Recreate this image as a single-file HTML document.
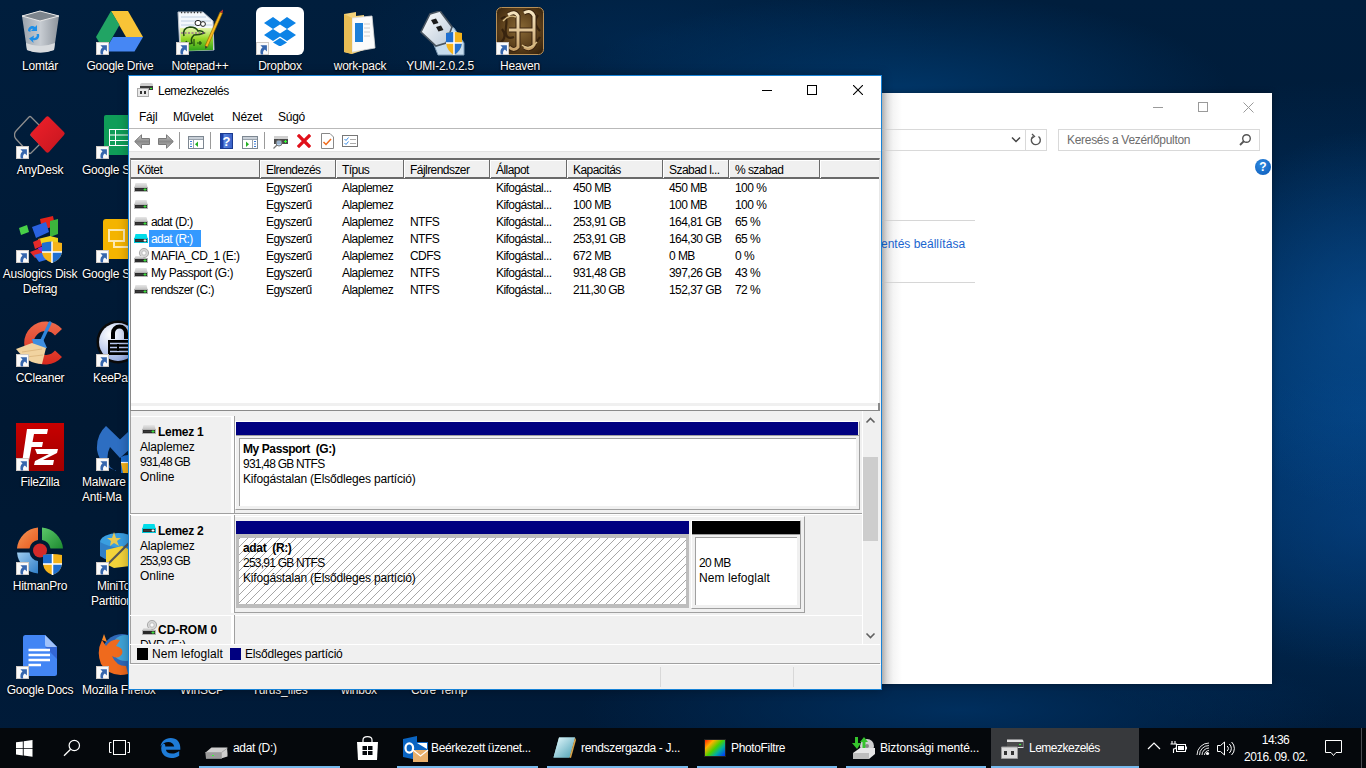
<!DOCTYPE html>
<html><head><meta charset="utf-8">
<style>
*{margin:0;padding:0;box-sizing:border-box}
html,body{width:1366px;height:768px;overflow:hidden}
body{position:relative;font-family:"Liberation Sans",sans-serif;font-size:11px;color:#000;
background:
 radial-gradient(ellipse 170px 190px at 1366px 320px, rgba(10,80,150,.65), rgba(10,80,150,0) 100%),
 radial-gradient(ellipse 200px 150px at 1366px 520px, rgba(8,70,140,.5), rgba(8,70,140,0) 100%),
 radial-gradient(ellipse 540px 330px at 1366px 410px, rgba(0,62,124,.95), rgba(0,62,124,0) 100%),
 radial-gradient(ellipse 330px 100px at 900px 92px, rgba(0,60,115,.8), rgba(0,60,115,0) 100%),
 radial-gradient(ellipse 300px 90px at 640px 40px, rgba(0,45,90,.55), rgba(0,45,90,0) 100%),
 radial-gradient(ellipse 380px 70px at 960px 710px, rgba(0,50,100,.85), rgba(0,50,100,0) 100%),
 linear-gradient(180deg,#001e3d 0%,#001b38 30%,#001832 55%,#001a36 80%,#001b3a 100%);
}
.abs{position:absolute}
.cell{position:absolute;height:17px;line-height:17px;white-space:nowrap;font-size:12px;letter-spacing:-0.55px;padding-top:1px;height:18px}
.hdic,.cdic{position:absolute;display:block}
.hdr{position:absolute;top:160px;height:18px;line-height:18px;padding-left:6px;padding-top:1px;white-space:nowrap;font-size:12px;letter-spacing:-0.55px}
.hsep{position:absolute;top:160px;width:2px;height:18px;border-left:1px solid #6a6a6a;border-right:1px solid #fff}
.di{position:absolute;width:76px;color:#fff;font-size:12px;letter-spacing:-0.25px;line-height:15px;text-align:center;text-shadow:0 0 2px #000,0 1px 2px #000}
.di .lb{position:absolute;left:-6px;width:88px;top:49px}
.sc{position:absolute;width:14px;height:14px;background:#fff;border:1px solid #bbb}
.sc:after{content:"";position:absolute;left:3px;top:3px;width:7px;height:7px;border-top:2px solid #2f6cbf;border-right:2px solid #2f6cbf;border-top-right-radius:6px}
.tbt{position:absolute;top:728px;height:40px;line-height:40px;color:#fff;font-size:12px;letter-spacing:-0.35px;white-space:nowrap}
.ul{position:absolute;top:766px;height:2px;background:#76b9ed}
.bold{font-weight:bold}
.wt{font-size:12px;letter-spacing:-0.5px}
</style></head><body>

<!-- back window: control panel -->
<div class="abs" style="left:881px;top:93px;width:391px;height:591px;background:#fff;box-shadow:0 0 6px rgba(0,0,0,.35)"></div>
<div class="abs" style="left:882px;top:93px;width:20px;height:591px;background:linear-gradient(90deg,#cdcdcd,#e6e6e6 25%,#f4f4f4 55%,#fff)"></div>
<!-- title buttons -->
<div class="abs" style="left:1153px;top:107px;width:10px;height:1px;background:#9a9a9a"></div>
<div class="abs" style="left:1198px;top:102px;width:10px;height:10px;border:1px solid #9a9a9a"></div>
<svg class="abs" style="left:1243px;top:102px" width="11" height="11"><path d="M0.5 0.5L10.5 10.5M10.5 0.5L0.5 10.5" stroke="#9a9a9a" stroke-width="1"/></svg>
<!-- address bar -->
<div class="abs" style="left:881px;top:129px;width:166px;height:22px;border:1px solid #d9d9d9;border-left:none"></div>
<div class="abs" style="left:1025px;top:129px;width:1px;height:22px;background:#d9d9d9"></div>
<svg class="abs" style="left:1011px;top:136px" width="10" height="8"><path d="M1 1.5L5 5.5L9 1.5" stroke="#444" stroke-width="1.5" fill="none"/></svg>
<svg class="abs" style="left:1029px;top:132px" width="14" height="16"><path d="M9.5 4.5A4.5 4.5 0 1 1 4 4.6" stroke="#555" stroke-width="1.4" fill="none"/><path d="M3 2L5.5 4.5L2.5 6.5" stroke="#555" stroke-width="1.3" fill="none"/></svg>
<div class="abs" style="left:1058px;top:129px;width:202px;height:22px;border:1px solid #d9d9d9"></div>
<div class="abs" style="left:1067px;top:130px;height:22px;line-height:21px;font-size:12px;letter-spacing:-0.3px;color:#6d6d6d;white-space:nowrap">Keresés a Vezérlőpulton</div>
<svg class="abs" style="left:1238px;top:133px" width="14" height="14"><circle cx="8.5" cy="5.5" r="3.8" stroke="#555" stroke-width="1.4" fill="none"/><path d="M6 8L2 12" stroke="#555" stroke-width="1.8"/></svg>
<!-- help -->
<div class="abs" style="left:1255px;top:159px;width:16px;height:16px;border-radius:50%;background:radial-gradient(circle at 40% 35%,#2f8ae0,#0a58b8);color:#fff;font-weight:bold;font-size:12px;line-height:16px;text-align:center">?</div>
<div class="abs" style="left:881px;top:220px;width:94px;height:1px;background:#d6d6d6"></div>
<div class="abs" style="left:881px;top:282px;width:94px;height:1px;background:#d6d6d6"></div>
<div class="abs" style="left:871px;top:235px;height:18px;line-height:18px;font-size:12px;color:#1a64cf;white-space:nowrap">mentés beállítása</div>

<!-- desktop icons -->
<svg width="0" height="0" style="position:absolute"><defs>
<symbol id="scut" viewBox="0 0 13 13"><rect x="0" y="0" width="13" height="13" fill="#fafafa"/><rect x="0.5" y="0.5" width="12" height="12" fill="none" stroke="#cfc9c4"/><path d="M4.4 3.2H10.9V9.4L8.9 7.5Q6.4 8.8 7.2 12.6H4.8Q3.4 7.8 6.5 5.4Z" fill="#3666ad"/></symbol>
<linearGradient id="hdg" x1="0" y1="0" x2="0" y2="1"><stop offset="0" stop-color="#e6e6e6"/><stop offset="1" stop-color="#c4c4c4"/></linearGradient>
<symbol id="hd" viewBox="0 0 14 9"><path d="M1.5 0H12.5L13.5 4H0.5Z" fill="url(#hdg)"/><rect x="0.5" y="4.5" width="13" height="4" fill="#2b2b2b" stroke="#b4b4b4"/><path d="M2 6.5H9" stroke="#444" stroke-width=".6"/><rect x="9.5" y="6" width="3" height="1" fill="#3ddc3d"/><rect x="10.5" y="5" width="1" height="3" fill="#3ddc3d"/></symbol>
<symbol id="hdc" viewBox="0 0 14 9"><path d="M1.5 0H12.5L13.5 4H0.5Z" fill="#00dde9"/><rect x="0.5" y="4.5" width="13" height="4" fill="#2b2b2b" stroke="#00c8d8"/><path d="M2 6.5H9" stroke="#444" stroke-width=".6"/><rect x="9.5" y="5.5" width="3" height="2" rx="1" fill="#fff"/></symbol>
<symbol id="cd" viewBox="0 0 15 15"><circle cx="10" cy="5" r="4.6" fill="#d6d6d6" stroke="#9c9c9c" stroke-width=".8"/><circle cx="10" cy="5" r="2.2" fill="#f4f4f4" stroke="#aaa" stroke-width=".6"/><circle cx="10" cy="5" r="1" fill="#fff"/><path d="M1.5 8H9L9.5 10H0.5Z" fill="url(#hdg)"/><rect x="0.5" y="10.5" width="13" height="4" fill="#2b2b2b" stroke="#b4b4b4"/><rect x="9.5" y="12" width="3" height="1" fill="#3ddc3d"/><rect x="10.5" y="11" width="1" height="3" fill="#3ddc3d"/></symbol>
<linearGradient id="binG" x1="0" y1="0" x2="1" y2="0"><stop offset="0" stop-color="#9aa3ad"/><stop offset=".5" stop-color="#c7ccd2"/><stop offset="1" stop-color="#8d949c"/></linearGradient>
</defs></svg>

<!-- Lomtar -->
<svg class="abs" style="left:21px;top:10px" width="39" height="43"><path d="M1 6L19 1L38 6L33 40Q19 45 6 40Z" fill="url(#binG)"/><path d="M1 6L19 1L38 6L19 11Z" fill="#7c848c" stroke="#e8e8e8" stroke-width="1"/><path d="M5 33Q19 39 34 33L33 40Q19 45 6 40Z" fill="#d8dbde"/><path d="M7 21C7 16 12 15 14 17L16 15V21H10L12 19C10 18 9 20 9.5 22ZM18 24C19 28 16 31 12 30L12.5 33L8 28.5L13 25.5L12.5 28C15 28 16.5 26 15.5 24Z" fill="#1d8fe8"/></svg>
<div class="di" style="left:2px;top:10px"><div class="lb">Lomtár</div></div>

<!-- Google Drive -->
<svg class="abs" style="left:96px;top:11px" width="48" height="41"><path d="M15 0H32L47 26H30Z" fill="#f8c437"/><path d="M15 0L0 26L8.5 40.5L23.5 14Z" fill="#21a464"/><path d="M8.5 40.5H38.5L47 26H17Z" fill="#4687f4"/></svg>
<svg class="abs" style="left:96px;top:42px" width="13" height="13"><use href="#scut"/></svg>
<div class="di" style="left:82px;top:10px"><div class="lb">Google Drive</div></div>

<!-- Notepad++ -->
<svg class="abs" style="left:176px;top:9px" width="48" height="43"><defs><linearGradient id="npg" x1="0" y1="0" x2="0" y2="1"><stop offset="0" stop-color="#e8f6b0"/><stop offset=".45" stop-color="#9ad82a"/><stop offset="1" stop-color="#2aa01a"/></linearGradient></defs><path d="M2 3H27L37 12L38 41L4 42Z" fill="#f4f8fc" stroke="#b8c0ca"/><path d="M4 19H37V41L5 42Z" fill="url(#npg)"/><path d="M5 3.5H26" stroke="#333" stroke-width="1.4" stroke-dasharray="1.2 2"/><path d="M5 8H30M5 12H35M5 16H36" stroke="#b0c4dc" stroke-width=".8"/><path d="M8 27Q6 19 14 18Q20 18 22 22Q26 21 28 24Q24 26 18 26Q14 30 16 34Q12 36 10 32" fill="none" stroke="#1e4a10" stroke-width="1.6"/><ellipse cx="22" cy="14" rx="3" ry="2.6" fill="#fff" stroke="#222"/><ellipse cx="27" cy="15" rx="2.4" ry="2.4" fill="#fff" stroke="#222"/><path d="M18 37V30M21 34H26M24 32V36" stroke="#1e4a10" stroke-width="1.2"/><path d="M5 24H30" stroke="#8a3aa0" stroke-width="1" stroke-dasharray="2 1.5"/><path d="M29 37L44 3L46.5 4L31.5 38Z" fill="#f6b81d" stroke="#8a5a00" stroke-width=".6"/><path d="M44 3L46.5 4L47 0.5Z" fill="#c33"/><path d="M29 37L31.5 38L29.5 40Z" fill="#333"/></svg>
<svg class="abs" style="left:176px;top:42px" width="13" height="13"><use href="#scut"/></svg>
<div class="di" style="left:162px;top:10px"><div class="lb">Notepad++</div></div>

<!-- Dropbox -->
<div class="abs" style="left:256px;top:7px;width:48px;height:48px;background:#fff;border-radius:6px"></div>
<svg class="abs" style="left:264px;top:17px" width="32" height="29"><path d="M9 0L0 6L9 12L0 18L9 24L16 19.5L23 24L32 18L23 12L32 6L23 0L16 5Z M9 12L16 7.5L23 12L16 16.5Z" fill="#0d83e6" fill-rule="evenodd"/><path d="M9 25.5L16 21L23 25.5L16 29.5Z" fill="#0d83e6"/></svg>
<svg class="abs" style="left:256px;top:42px" width="13" height="13"><use href="#scut"/></svg>
<div class="di" style="left:242px;top:10px"><div class="lb">Dropbox</div></div>

<!-- work-pack folder -->
<svg class="abs" style="left:344px;top:12px" width="32" height="42"><path d="M0 2L12 0V4L20 3V38L8 42L0 40Z" fill="#f3d27a"/><path d="M8 6L28 4L31 36L8 40Z" fill="#fbfbfb" stroke="#d9d9d9" stroke-width=".8"/><path d="M11 11H19V30H11Z" fill="#1c7fd8"/><path d="M20 12H26M20 16H26M20 20H26M20 24H26" stroke="#ccc"/><path d="M0 2L8 6V42L0 40Z" fill="#e8bd55"/></svg>
<div class="di" style="left:322px;top:10px"><div class="lb">work-pack</div></div>

<!-- YUMI -->
<svg class="abs" style="left:420px;top:11px" width="45" height="45"><defs><linearGradient id="ymg" x1="0" y1="0" x2="1" y2="1"><stop offset="0" stop-color="#ffffff"/><stop offset="1" stop-color="#b8c8d8"/></linearGradient></defs><path d="M14 34L28 14L34 17L44 32V44H18Z" fill="#c6dcee" stroke="#7c9ab4"/><path d="M10 3L20 0L32 16L26 32L16 35L1 21Z" fill="url(#ymg)" stroke="#4a5560" stroke-width="1.6"/><path d="M11 9L16 7.5L18.5 12L13.5 13.5ZM16 16L21 14.5L23.5 19L18.5 20.5Z" fill="#1c1c1c"/><path d="M26 22Q34 20 42 22V32Q41 40 34 44Q27 40 26 32Z" fill="#f5b31a"/><path d="M26 22Q30 21 34 21V32H26ZM34 32H42Q41 40 34 44Z" fill="#1f6fd0"/><path d="M34 21V44M26 32H42" stroke="#fff" stroke-width="1.5"/></svg>
<div class="di" style="left:402px;top:10px"><div class="lb">YUMI-2.0.2.5</div></div>

<!-- Heaven -->
<svg class="abs" style="left:496px;top:7px" width="48" height="48"><defs><radialGradient id="hvg" cx=".5" cy=".45" r=".75"><stop offset="0" stop-color="#8a6a36"/><stop offset=".55" stop-color="#5a3e1a"/><stop offset="1" stop-color="#2a1a08"/></radialGradient><linearGradient id="hvl" x1="0" y1="0" x2="0" y2="1"><stop offset="0" stop-color="#f6e6c2"/><stop offset="1" stop-color="#c8a26a"/></linearGradient></defs><rect x="0.5" y="0.5" width="47" height="47" rx="5" fill="url(#hvg)" stroke="#b89058"/><path d="M5 12Q12 6 10 20T18 30M30 42Q38 40 44 30M4 36Q12 30 6 22M42 8Q36 16 44 24" stroke="#2e1c0a" stroke-width="2.2" fill="none" opacity=".8"/><path d="M12 8Q19 3 22 9V40Q18 45 13 40M28 6Q35 2 38 9V38Q34 44 28 40M13 23H37" stroke="#3a2410" stroke-width="5" fill="none"/><path d="M12 8Q19 3 22 9V40Q18 45 13 40M28 6Q35 2 38 9V38Q34 44 28 40M13 23H37" stroke="url(#hvl)" stroke-width="3" fill="none"/><path d="M7 14Q13 7 20 10M26 38Q33 44 41 35" stroke="#d8be88" stroke-width="1.4" fill="none"/></svg>
<svg class="abs" style="left:496px;top:42px" width="13" height="13"><use href="#scut"/></svg>
<div class="di" style="left:482px;top:10px"><div class="lb">Heaven</div></div>

<!-- AnyDesk -->
<svg class="abs" style="left:14px;top:115px" width="52" height="40"><defs><linearGradient id="adr" x1="0" y1="0" x2="1" y2="1"><stop offset="0" stop-color="#f0202a"/><stop offset="1" stop-color="#c4161f"/></linearGradient></defs><path d="M15 2Q16 1 17 2L26 11L17 20L26 29L17 38Q16 39 15 38L2 24Q0.5 22.5 0.5 20Q0.5 17.5 2 16Z" fill="none" stroke="#8e8e8e" stroke-width="1.3"/><path d="M32 2Q33.5 0.5 35 2L50 17Q51.5 18.5 50 20L35 37Q33.5 38.5 32 37L17 21Q15.5 19.5 17 18Z" fill="url(#adr)"/></svg>
<svg class="abs" style="left:16px;top:146px" width="13" height="13"><use href="#scut"/></svg>
<div class="di" style="left:2px;top:114px"><div class="lb">AnyDesk</div></div>

<!-- Google Sheets (clipped) -->
<div class="abs" style="left:104px;top:115px;width:32px;height:40px;background:#0f9d58;border-radius:2px"></div>
<svg class="abs" style="left:109px;top:129px" width="20" height="17"><path d="M0.5 0.5H20M0.5 6H20M0.5 11.5H20M0.5 16.5H20M0.5 0V17M6.5 0V17" stroke="#fff" stroke-width="1"/></svg>
<svg class="abs" style="left:96px;top:146px" width="13" height="13"><use href="#scut"/></svg>
<div class="abs" style="left:82px;top:163px;height:15px;line-height:15px;color:#fff;font-size:12px;letter-spacing:-0.25px;text-shadow:0 0 2px #000,0 1px 2px #000;white-space:nowrap">Google S</div>

<!-- Auslogics -->
<svg class="abs" style="left:19px;top:216px" width="44" height="47"><path d="M21 3L34 0L36 10L23 14Z" fill="#e2231a"/><path d="M13 11L27 6L30 16L17 22Z" fill="#2a62e0"/><path d="M31 5L39 3V18L31 21Z" fill="#3cb43c"/><path d="M0 12L8 9L10 16L2 19Z" fill="#48d048"/><path d="M19 23L31 20L39 22V30L25 33Z" fill="#f0d21e"/><path d="M14 26L21 23L23 30L16 33Z" fill="#e42a2a"/><path d="M19 32L28 29L30 37L21 40Z" fill="#8b2ad8"/><path d="M11 36L19 33L24 37L16 42Z" fill="#e42a2a"/><path d="M15 39L26 36L30 43L20 46Z" fill="#2f6fe8"/><path d="M23 27Q32 24 43 27V36Q42 44 33 47Q24 44 23 36Z" fill="#f5b31a"/><path d="M23 27Q28 25.5 33 25.5V36H23ZM33 36H43Q42 44 33 47Z" fill="#1f6fd0"/><path d="M33 25.5V47M23 36H43" stroke="#fff" stroke-width="1.5"/></svg>
<svg class="abs" style="left:16px;top:250px" width="13" height="13"><use href="#scut"/></svg>
<div class="di" style="left:2px;top:218px"><div class="lb">Auslogics Disk<br>Defrag</div></div>

<!-- Google Slides (clipped) -->
<div class="abs" style="left:103px;top:219px;width:32px;height:40px;background:#f4b400;border-radius:3px"></div>
<svg class="abs" style="left:108px;top:228px" width="22" height="22"><rect x="1" y="2" width="15" height="11" fill="none" stroke="#fde9b0" stroke-width="2"/><path d="M6 13V19H21" stroke="#fde9b0" stroke-width="2" fill="none"/></svg>
<svg class="abs" style="left:96px;top:250px" width="13" height="13"><use href="#scut"/></svg>
<div class="abs" style="left:82px;top:267px;height:15px;line-height:15px;color:#fff;font-size:12px;letter-spacing:-0.25px;text-shadow:0 0 2px #000,0 1px 2px #000;white-space:nowrap">Google S</div>

<!-- CCleaner -->
<svg class="abs" style="left:14px;top:320px" width="52" height="46"><defs><linearGradient id="ccg" x1="0" y1="0" x2="0" y2="1"><stop offset="0" stop-color="#ee6a4a"/><stop offset="1" stop-color="#d8281e"/></linearGradient></defs><path d="M48 9A21.5 21.5 0 1 0 48 37L41 30.5A12 12 0 1 1 41 15.5Z" fill="url(#ccg)"/><path d="M36 3L27 22" stroke="#2f86dc" stroke-width="3.2" stroke-linecap="round"/><path d="M18 19L29 19L33 28L21 30Z" fill="#3d8ee0"/><path d="M2 29L18 23L32 28L28 44Q14 44 2 29Z" fill="#f1d3a0"/><path d="M8 32L28 29M12 37L29 35" stroke="#d9b27a" stroke-width=".8"/></svg>
<svg class="abs" style="left:16px;top:354px" width="13" height="13"><use href="#scut"/></svg>
<div class="di" style="left:2px;top:322px"><div class="lb">CCleaner</div></div>

<!-- KeePass (clipped) -->
<svg class="abs" style="left:96px;top:318px" width="32" height="48"><defs><radialGradient id="kpg" cx=".3" cy=".3" r=".8"><stop offset="0" stop-color="#ffffff"/><stop offset="1" stop-color="#8fa6e0"/></radialGradient></defs><circle cx="22" cy="24" r="21.5" fill="#0a0a0a"/><circle cx="22" cy="24" r="19" fill="url(#kpg)"/><path d="M15 21V15A8.5 8.5 0 0 1 32 15V21H28V15A4.5 4.5 0 0 0 19 15V21Z" fill="#000"/><path d="M12 22H32V37H12Z" fill="#000"/><path d="M14 25.5H32M14 29.5H32M14 33.5H32" stroke="#b8c6ee" stroke-width="1.3"/><path d="M22 26V33" stroke="#000" stroke-width="2"/></svg>
<svg class="abs" style="left:96px;top:354px" width="13" height="13"><use href="#scut"/></svg>
<div class="abs" style="left:93px;top:371px;height:15px;line-height:15px;color:#fff;font-size:12px;letter-spacing:-0.25px;text-shadow:0 0 2px #000,0 1px 2px #000;white-space:nowrap">KeePass</div>

<!-- FileZilla -->
<div class="abs" style="left:16px;top:423px;width:48px;height:48px;background:#b80000;background:linear-gradient(180deg,#c80000,#a00000)"></div>
<svg class="abs" style="left:20px;top:427px" width="40" height="40"><path d="M7 2H28L27 7H14L12.5 15H23L22 20H11.5L8.5 36H2Z" fill="#fff"/><path d="M15 22H38L37 26L23 33H34L33 38H14L15 34L29 27H17Z" fill="#fff"/></svg>
<svg class="abs" style="left:16px;top:458px" width="13" height="13"><use href="#scut"/></svg>
<div class="di" style="left:2px;top:426px"><div class="lb">FileZilla</div></div>

<!-- Malwarebytes (clipped) -->
<svg class="abs" style="left:96px;top:425px" width="32" height="48"><path d="M10 1L24 14.5L34 5V24L24 33L14 22Q9 32 14 42Q17 45 22 46Q4 42 1 25Q0 10 10 1Z" fill="#2d6ec2"/><path d="M25 32Q29 30 33 30V48H25Z" fill="#1f6fd0"/><path d="M25 38H33V48H27Z" fill="#f5b31a"/><path d="M25 37.5H33" stroke="#fff" stroke-width="1.2"/></svg>
<svg class="abs" style="left:96px;top:458px" width="13" height="13"><use href="#scut"/></svg>
<div class="abs" style="left:82px;top:475px;height:30px;line-height:15px;color:#fff;font-size:12px;letter-spacing:-0.25px;text-shadow:0 0 2px #000,0 1px 2px #000;white-space:nowrap">Malware<br>Anti-Ma</div>

<!-- HitmanPro -->
<svg class="abs" style="left:16px;top:527px" width="48" height="48"><defs><linearGradient id="hpo" x1="0" y1="0" x2="1" y2="1"><stop offset="0" stop-color="#f59a5a"/><stop offset="1" stop-color="#e8581c"/></linearGradient><linearGradient id="hpg" x1="0" y1="0" x2="1" y2="1"><stop offset="0" stop-color="#5cc86a"/><stop offset="1" stop-color="#1d8a30"/></linearGradient><linearGradient id="hpb" x1="0" y1="0" x2="1" y2="1"><stop offset="0" stop-color="#9fcdf0"/><stop offset="1" stop-color="#2f7ec8"/></linearGradient></defs><path d="M1 21.5A23 23 0 0 1 22 0.5V13A10 10 0 0 0 13.5 21.5Z" fill="url(#hpo)"/><path d="M26 0.5A23 23 0 0 1 47 21.5H34.5A10 10 0 0 0 26 13Z" fill="url(#hpg)"/><path d="M1 25.5H13.5A10 10 0 0 0 22 34V46.5A23 23 0 0 1 1 25.5Z" fill="url(#hpb)"/><circle cx="24" cy="23.5" r="7" fill="#d42a2a"/><path d="M27 28Q36 26 46 28V37Q45 45 36.5 48Q28 45 27 37Z" fill="#f5b31a"/><path d="M27 28Q31.5 27 36.5 27V37H27ZM36.5 37H46Q45 45 36.5 48Z" fill="#1f6fd0"/><path d="M36.5 27V48M27 37H46" stroke="#fff" stroke-width="1.5"/></svg>
<svg class="abs" style="left:16px;top:562px" width="13" height="13"><use href="#scut"/></svg>
<div class="di" style="left:2px;top:530px"><div class="lb">HitmanPro</div></div>

<!-- MiniTool (clipped) -->
<svg class="abs" style="left:98px;top:530px" width="30" height="44"><ellipse cx="20" cy="12" rx="18" ry="9" fill="#3a9ee0"/><path d="M2 12V26Q20 38 32 26V12Q20 22 2 12Z" fill="#2f80c8"/><path d="M8 20L24 16L32 20V36L16 38L8 34Z" fill="#f3d33a"/><path d="M10 34L32 12" stroke="#555" stroke-width="2"/><path d="M14 8L16 2L18 8L23 8L19 11L21 16L16 13L12 16L13 11L9 8Z" fill="#e8c850"/></svg>
<svg class="abs" style="left:96px;top:562px" width="13" height="13"><use href="#scut"/></svg>
<div class="abs" style="left:97px;top:579px;height:15px;line-height:15px;color:#fff;font-size:12px;letter-spacing:-0.25px;text-shadow:0 0 2px #000,0 1px 2px #000;white-space:nowrap">MiniTool</div><div class="abs" style="left:91px;top:594px;height:15px;line-height:15px;color:#fff;font-size:12px;letter-spacing:-0.25px;text-shadow:0 0 2px #000,0 1px 2px #000;white-space:nowrap">Partition</div>

<!-- Google Docs -->
<svg class="abs" style="left:23px;top:635px" width="34" height="41"><path d="M2.5 0H22L34 12V38.5Q34 41 31.5 41H2.5Q0 41 0 38.5V2.5Q0 0 2.5 0Z" fill="#4285f4"/><path d="M22 0L34 12H24.5Q22 12 22 9.5Z" fill="#a1c2fa"/><path d="M22 12L34 24V12Z" fill="#3367d6"/><path d="M5.5 15H27M5.5 20H27M5.5 25H27M5.5 30H18" stroke="#fff" stroke-width="2.4"/></svg>
<svg class="abs" style="left:16px;top:666px" width="13" height="13"><use href="#scut"/></svg>
<div class="di" style="left:2px;top:634px"><div class="lb">Google Docs</div></div>

<!-- Firefox (clipped) -->
<svg class="abs" style="left:98px;top:632px" width="30" height="45"><circle cx="24" cy="22" r="20" fill="#2f68b8"/><circle cx="27" cy="16" r="13" fill="#3fa3d8"/><path d="M4 8L8 14Q14 6 22 8L18 14Q26 16 24 22Q20 28 14 24Q18 34 28 34L30 42Q12 46 3 32Q-2 20 4 8Z" fill="#ef6a1d"/><path d="M4 8L6 2L9 10Z" fill="#f5892a"/></svg>
<svg class="abs" style="left:96px;top:666px" width="13" height="13"><use href="#scut"/></svg>
<div class="abs" style="left:82px;top:683px;height:15px;line-height:15px;color:#fff;font-size:12px;letter-spacing:-0.25px;text-shadow:0 0 2px #000,0 1px 2px #000;white-space:nowrap">Mozilla Firefox</div>

<!-- bottom row labels hidden behind window -->
<div class="abs" style="left:180px;top:683px;height:15px;line-height:15px;color:#fff;font-size:12px;letter-spacing:-0.25px;text-shadow:0 0 2px #000,0 1px 2px #000;white-space:nowrap">WinSCP</div>
<div class="abs" style="left:252px;top:683px;height:15px;line-height:15px;color:#fff;font-size:12px;letter-spacing:-0.25px;text-shadow:0 0 2px #000,0 1px 2px #000;white-space:nowrap">Turus_files</div>
<div class="abs" style="left:341px;top:683px;height:15px;line-height:15px;color:#fff;font-size:12px;letter-spacing:-0.25px;text-shadow:0 0 2px #000,0 1px 2px #000;white-space:nowrap">winbox</div>
<div class="abs" style="left:411px;top:683px;height:15px;line-height:15px;color:#fff;font-size:12px;letter-spacing:-0.25px;text-shadow:0 0 2px #000,0 1px 2px #000;white-space:nowrap">Core Temp</div>

<!-- front window: Lemezkezelés -->
<div class="abs" style="left:128px;top:75px;width:754px;height:615px;border:1px solid #1883d7;background:#f0f0f0;box-shadow:0 0 10px rgba(0,0,0,.3)"></div>
<div class="abs" style="left:129px;top:76px;width:752px;height:52px;background:#fff"></div>
<!-- title icon -->
<div class="abs" style="left:137px;top:83px;width:16px;height:15px">
 <div class="abs" style="left:3px;top:0;width:13px;height:3px;background:#cfcfcf;border-radius:2px 2px 0 0"></div>
 <div class="abs" style="left:3px;top:3px;width:13px;height:4px;background:#3a3a3a"></div>
 <div class="abs" style="left:13px;top:5px;width:2px;height:1px;background:#3f3"></div>
 <div class="abs" style="left:0;top:5px;width:12px;height:9px;background:#e8e8e8;border:1px solid #aaa"></div>
 <div class="abs" style="left:3px;top:8px;width:2px;height:3px;background:#333"></div>
 <div class="abs" style="left:7px;top:8px;width:2px;height:3px;background:#333"></div>
</div>
<div class="abs" style="left:158px;top:83px;height:16px;line-height:16px;font-size:12px;letter-spacing:-0.5px;white-space:nowrap">Lemezkezelés</div>
<div class="abs" style="left:762px;top:90px;width:10px;height:1px;background:#000"></div>
<div class="abs" style="left:807px;top:85px;width:10px;height:10px;border:1px solid #000"></div>
<svg class="abs" style="left:853px;top:85px" width="10" height="10"><path d="M0 0L10 10M10 0L0 10" stroke="#000" stroke-width="1.1"/></svg>
<!-- menu -->
<div class="abs" style="left:139px;top:108px;line-height:18px;font-size:12px;letter-spacing:-0.25px;white-space:nowrap">Fájl</div>
<div class="abs" style="left:173px;top:108px;line-height:18px;font-size:12px;letter-spacing:-0.25px;white-space:nowrap">Művelet</div>
<div class="abs" style="left:232px;top:108px;line-height:18px;font-size:12px;letter-spacing:-0.25px;white-space:nowrap">Nézet</div>
<div class="abs" style="left:278px;top:108px;line-height:18px;font-size:12px;letter-spacing:-0.25px;white-space:nowrap">Súgó</div>
<div class="abs" style="left:129px;top:128px;width:752px;height:1px;background:#b9b9b9"></div>
<!-- toolbar -->
<div class="abs" style="left:129px;top:129px;width:752px;height:22px;background:#fff"></div>
<div class="abs" style="left:129px;top:151px;width:752px;height:1px;background:#e3e3e3"></div>
<svg class="abs" style="left:134px;top:134px" width="17" height="15"><defs><linearGradient id="ga" x1="0" y1="0" x2="0" y2="1"><stop offset="0" stop-color="#cfcfcf"/><stop offset=".5" stop-color="#8a8a8a"/><stop offset="1" stop-color="#bdbdbd"/></linearGradient></defs><path d="M0.7 7.5L7.5 0.8V4.5H15.5V10.5H7.5V14.2Z" fill="url(#ga)" stroke="#7a7a7a" stroke-width="1"/></svg>
<svg class="abs" style="left:157px;top:134px" width="17" height="15"><path d="M16.3 7.5L9.5 0.8V4.5H1.5V10.5H9.5V14.2Z" fill="url(#ga)" stroke="#7a7a7a" stroke-width="1"/></svg>
<div class="abs" style="left:179px;top:132px;width:1px;height:17px;background:#9a9a9a"></div>
<svg class="abs" style="left:188px;top:136px" width="16" height="13"><rect x="0.5" y="0.5" width="15" height="12" fill="#fff" stroke="#7d8791"/><rect x="1" y="1" width="14" height="2" fill="#c9d0d8"/><path d="M1 3.5H15M5.5 4V12" stroke="#9aa3ad"/><path d="M2 5.5H4M2 8H4M2 10.5H4" stroke="#3b7dd8"/><path d="M10 5.5V11L7 8.25Z" fill="#22b022"/></svg>
<div class="abs" style="left:210px;top:132px;width:1px;height:17px;background:#9a9a9a"></div>
<div class="abs" style="left:220px;top:133px;width:13px;height:16px;background:linear-gradient(90deg,#1b3fa8 0,#1b3fa8 2px,#5b86e0 3px,#3a62c8);border:1px solid #1a3a90;color:#fff;font-size:13px;line-height:15px;text-align:center;font-weight:bold">?</div>
<svg class="abs" style="left:242px;top:136px" width="16" height="13"><rect x="0.5" y="0.5" width="15" height="12" fill="#fff" stroke="#7d8791"/><rect x="1" y="1" width="14" height="2" fill="#c9d0d8"/><path d="M1 3.5H15M10.5 4V12" stroke="#9aa3ad"/><path d="M12 5.5H14M12 8H14M12 10.5H14" stroke="#3b7dd8"/><path d="M4 5.5V11L7 8.25Z" fill="#22b022"/></svg>
<div class="abs" style="left:264px;top:132px;width:1px;height:17px;background:#9a9a9a"></div>
<svg class="abs" style="left:273px;top:136px" width="16" height="13"><rect x="1" y="0" width="14" height="3" fill="#d0d0d0"/><rect x="1" y="3" width="14" height="5" fill="#4a4a4a"/><path d="M11 5.5H14M12.5 4V7" stroke="#3f3"/><circle cx="6" cy="7" r="3" fill="#a9c8e8" fill-opacity=".8" stroke="#777"/><path d="M4 9L0.5 12.5" stroke="#777" stroke-width="1.3"/></svg>
<svg class="abs" style="left:297px;top:134px" width="14" height="14"><path d="M2 2L12 12M12 2L2 12" stroke="#e0101a" stroke-width="3.2" stroke-linecap="square"/></svg>
<svg class="abs" style="left:321px;top:133px" width="13" height="16"><path d="M0.5 0.5H9L12.5 4V15.5H0.5Z" fill="#fff" stroke="#888"/><path d="M2.5 9L5 11.5L10 6" stroke="#f06a1a" stroke-width="1.5" fill="none"/></svg>
<svg class="abs" style="left:342px;top:135px" width="16" height="12"><rect x="0.5" y="0.5" width="15" height="11" fill="#fff" stroke="#777"/><path d="M2.5 4L4 5.5L6.5 2.5M2.5 8L4 9.5L6.5 6.5" stroke="#3b8ee8" fill="none"/><path d="M8 4.5H14M8 8.5H14" stroke="#aaa"/></svg>
<!-- list view frame -->
<div class="abs" style="left:130px;top:158px;width:750px;height:253px;background:#fff;border-top:2px solid #6a6a6a;border-left:1px solid #8a8a8a;border-right:1px solid #e8e8e8"></div>
<div class="abs" style="left:131px;top:160px;width:748px;height:18px;background:#f0f0f0;border-bottom:1px solid #6a6a6a"></div>
<div class="abs" style="left:131px;top:160px;width:748px;height:1px;background:#fff"></div>
<div class="hdr" style="left:131px">Kötet</div>
<div class="hsep" style="left:259px"></div>
<div class="hdr" style="left:260px">Elrendezés</div>
<div class="hsep" style="left:335px"></div>
<div class="hdr" style="left:336px">Típus</div>
<div class="hsep" style="left:403px"></div>
<div class="hdr" style="left:404px">Fájlrendszer</div>
<div class="hsep" style="left:489px"></div>
<div class="hdr" style="left:490px">Állapot</div>
<div class="hsep" style="left:566px"></div>
<div class="hdr" style="left:567px">Kapacitás</div>
<div class="hsep" style="left:662px"></div>
<div class="hdr" style="left:663px">Szabad l...</div>
<div class="hsep" style="left:728px"></div>
<div class="hdr" style="left:729px">% szabad</div>
<div class="hsep" style="left:819px"></div>
<div class="abs" style="left:131px;top:178px;width:748px;height:1px;background:#6a6a6a"></div>

<svg class="hdic" style="left:134px;top:183px" width="14" height="9"><use href="#hd"/></svg>
<div class="cell" style="left:266px;top:179px"><span>Egyszerű</span></div>
<div class="cell" style="left:342px;top:179px"><span>Alaplemez</span></div>
<div class="cell" style="left:496px;top:179px"><span>Kifogástal...</span></div>
<div class="cell" style="left:573px;top:179px"><span>450 MB</span></div>
<div class="cell" style="left:669px;top:179px"><span>450 MB</span></div>
<div class="cell" style="left:735px;top:179px"><span>100 %</span></div>
<svg class="hdic" style="left:134px;top:200px" width="14" height="9"><use href="#hd"/></svg>
<div class="cell" style="left:266px;top:196px"><span>Egyszerű</span></div>
<div class="cell" style="left:342px;top:196px"><span>Alaplemez</span></div>
<div class="cell" style="left:496px;top:196px"><span>Kifogástal...</span></div>
<div class="cell" style="left:573px;top:196px"><span>100 MB</span></div>
<div class="cell" style="left:669px;top:196px"><span>100 MB</span></div>
<div class="cell" style="left:735px;top:196px"><span>100 %</span></div>
<svg class="hdic" style="left:134px;top:217px" width="14" height="9"><use href="#hd"/></svg>
<div class="cell" style="left:151px;top:213px"><span>adat (D:)</span></div>
<div class="cell" style="left:266px;top:213px"><span>Egyszerű</span></div>
<div class="cell" style="left:342px;top:213px"><span>Alaplemez</span></div>
<div class="cell" style="left:410px;top:213px"><span>NTFS</span></div>
<div class="cell" style="left:496px;top:213px"><span>Kifogástal...</span></div>
<div class="cell" style="left:573px;top:213px"><span>253,91 GB</span></div>
<div class="cell" style="left:669px;top:213px"><span>164,81 GB</span></div>
<div class="cell" style="left:735px;top:213px"><span>65 %</span></div>
<svg class="hdic" style="left:134px;top:234px" width="14" height="9"><use href="#hdc"/></svg>
<div class="abs" style="left:149px;top:230px;width:52px;height:17px;background:#3399ff"></div>
<div class="cell" style="left:151px;top:230px"><span style="color:#fff">adat (R:)</span></div>
<div class="cell" style="left:266px;top:230px"><span>Egyszerű</span></div>
<div class="cell" style="left:342px;top:230px"><span>Alaplemez</span></div>
<div class="cell" style="left:410px;top:230px"><span>NTFS</span></div>
<div class="cell" style="left:496px;top:230px"><span>Kifogástal...</span></div>
<div class="cell" style="left:573px;top:230px"><span>253,91 GB</span></div>
<div class="cell" style="left:669px;top:230px"><span>164,30 GB</span></div>
<div class="cell" style="left:735px;top:230px"><span>65 %</span></div>
<svg class="cdic" style="left:134px;top:248px" width="15" height="15"><use href="#cd"/></svg>
<div class="cell" style="left:151px;top:247px"><span>MAFIA_CD_1 (E:)</span></div>
<div class="cell" style="left:266px;top:247px"><span>Egyszerű</span></div>
<div class="cell" style="left:342px;top:247px"><span>Alaplemez</span></div>
<div class="cell" style="left:410px;top:247px"><span>CDFS</span></div>
<div class="cell" style="left:496px;top:247px"><span>Kifogástal...</span></div>
<div class="cell" style="left:573px;top:247px"><span>672 MB</span></div>
<div class="cell" style="left:669px;top:247px"><span>0 MB</span></div>
<div class="cell" style="left:735px;top:247px"><span>0 %</span></div>
<svg class="hdic" style="left:134px;top:268px" width="14" height="9"><use href="#hd"/></svg>
<div class="cell" style="left:151px;top:264px"><span>My Passport (G:)</span></div>
<div class="cell" style="left:266px;top:264px"><span>Egyszerű</span></div>
<div class="cell" style="left:342px;top:264px"><span>Alaplemez</span></div>
<div class="cell" style="left:410px;top:264px"><span>NTFS</span></div>
<div class="cell" style="left:496px;top:264px"><span>Kifogástal...</span></div>
<div class="cell" style="left:573px;top:264px"><span>931,48 GB</span></div>
<div class="cell" style="left:669px;top:264px"><span>397,26 GB</span></div>
<div class="cell" style="left:735px;top:264px"><span>43 %</span></div>
<svg class="hdic" style="left:134px;top:285px" width="14" height="9"><use href="#hd"/></svg>
<div class="cell" style="left:151px;top:281px"><span>rendszer (C:)</span></div>
<div class="cell" style="left:266px;top:281px"><span>Egyszerű</span></div>
<div class="cell" style="left:342px;top:281px"><span>Alaplemez</span></div>
<div class="cell" style="left:410px;top:281px"><span>NTFS</span></div>
<div class="cell" style="left:496px;top:281px"><span>Kifogástal...</span></div>
<div class="cell" style="left:573px;top:281px"><span>211,30 GB</span></div>
<div class="cell" style="left:669px;top:281px"><span>152,37 GB</span></div>
<div class="cell" style="left:735px;top:281px"><span>72 %</span></div>
<!-- splitter -->
<div class="abs" style="left:131px;top:403px;width:748px;height:3px;background:#f0f0f0"></div>
<div class="abs" style="left:131px;top:406px;width:748px;height:1px;background:#fff"></div>
<div class="abs" style="left:130px;top:410px;width:750px;height:1px;background:#8a8a8a"></div>
<div class="abs" style="left:878px;top:403px;width:2px;height:8px;background:#8a8a8a"></div>
<!-- graphical view -->
<div class="abs" style="left:130px;top:411px;width:733px;height:233px;background:#f0f0f0;border-left:1px solid #a0a0a0"></div>
<!-- scrollbar -->
<div class="abs" style="left:863px;top:411px;width:16px;height:233px;background:#f0f0f0"></div>
<svg class="abs" style="left:865px;top:416px" width="11" height="9"><path d="M1.5 6.5L5.5 2.5L9.5 6.5" stroke="#606060" stroke-width="1.6" fill="none"/></svg>
<div class="abs" style="left:863px;top:457px;width:15px;height:84px;background:#cdcdcd"></div>
<svg class="abs" style="left:865px;top:631px" width="11" height="9"><path d="M1.5 2.5L5.5 6.5L9.5 2.5" stroke="#606060" stroke-width="1.6" fill="none"/></svg>

<!-- Lemez 1 -->
<div class="abs" style="left:131px;top:416px;width:103px;height:97px;border-top:1px solid #fff;border-right:3px solid #fff"></div>
<div class="abs" style="left:234px;top:416px;width:1px;height:97px;background:#a0a0a0"></div>
<div class="abs" style="left:130px;top:513px;width:732px;height:1px;background:#a0a0a0"></div>
<svg class="hdic" style="left:142px;top:425px" width="14" height="9"><use href="#hd"/></svg>
<div class="abs" style="left:158px;top:425px;line-height:15px;font-size:12px;white-space:nowrap"><div style="font-weight:bold;letter-spacing:-0.29px">Lemez 1</div></div>
<div class="abs" style="left:140px;top:440px;line-height:15px;font-size:12px;white-space:nowrap"><div style="letter-spacing:-0.16px">Alaplemez</div><div style="letter-spacing:-0.83px">931,48 GB</div><div style="letter-spacing:-0.05px">Online</div></div>
<div class="abs" style="left:235px;top:421px;width:625px;height:89px;border-top:1px solid #fff;border-left:1px solid #fff;border-right:1px solid #a0a0a0;border-bottom:1px solid #a0a0a0"></div>
<div class="abs" style="left:236px;top:422px;width:622px;height:13px;background:#000080"></div>
<div class="abs" style="left:236px;top:435px;width:623px;height:1px;background:#a0a0a0"></div>
<div class="abs" style="left:239px;top:438px;width:617px;height:68px;background:#fff;border-left:1px solid #a0a0a0;border-top:1px solid #a0a0a0"></div>
<div class="abs" style="left:243px;top:442px;line-height:15px;font-size:12px;white-space:nowrap"><div style="font-weight:bold;letter-spacing:-0.41px">My Passport&nbsp; (G:)</div><div style="letter-spacing:-0.76px">931,48 GB NTFS</div><div style="letter-spacing:-0.18px">Kifogástalan (Elsődleges partíció)</div></div>

<!-- Lemez 2 -->
<div class="abs" style="left:131px;top:515px;width:103px;height:98px;border-top:1px solid #fff;border-right:3px solid #fff"></div>
<div class="abs" style="left:234px;top:515px;width:1px;height:98px;background:#a0a0a0"></div>
<div class="abs" style="left:130px;top:615px;width:732px;height:1px;background:#fff"></div>
<svg class="hdic" style="left:142px;top:524px" width="14" height="9"><use href="#hdc"/></svg>
<div class="abs" style="left:158px;top:524px;line-height:15px;font-size:12px;white-space:nowrap"><div style="font-weight:bold;letter-spacing:-0.29px">Lemez 2</div></div>
<div class="abs" style="left:140px;top:539px;line-height:15px;font-size:12px;white-space:nowrap"><div style="letter-spacing:-0.16px">Alaplemez</div><div style="letter-spacing:-0.83px">253,93 GB</div><div style="letter-spacing:-0.05px">Online</div></div>
<div class="abs" style="left:235px;top:516px;width:570px;height:97px;border-top:1px solid #fff;border-right:1px solid #a0a0a0;border-bottom:1px solid #a0a0a0"></div>
<div class="abs" style="left:862px;top:411px;width:1px;height:233px;background:#fff"></div>
<div class="abs" style="left:130px;top:514px;width:732px;height:1px;background:#fff"></div>
<div class="abs" style="left:236px;top:521px;width:453px;height:13px;background:#000080"></div>
<svg class="abs" style="left:236px;top:534px" width="453" height="74"><defs><pattern id="hatch" x="0" y="0" width="8" height="8" patternUnits="userSpaceOnUse"><rect width="8" height="8" fill="#fff"/><path d="M0 7h1v1h-1zM1 6h1v1h-1zM2 5h1v1h-1zM3 4h1v1h-1zM4 3h1v1h-1zM5 2h1v1h-1zM6 1h1v1h-1zM7 0h1v1h-1z" fill="#a6a6a6"/></pattern></defs><rect x="0" y="0" width="453" height="74" fill="#bdbdbd"/><rect x="3" y="4" width="447" height="66" fill="url(#hatch)"/></svg>
<div class="abs" style="left:243px;top:541px;line-height:15px;font-size:12px;white-space:nowrap"><div style="font-weight:bold;letter-spacing:-0.35px">adat&nbsp; (R:)</div><div style="letter-spacing:-0.76px">253,91 GB NTFS</div><div style="letter-spacing:-0.18px">Kifogástalan (Elsődleges partíció)</div></div>
<div class="abs" style="left:691px;top:520px;width:110px;height:89px;border-right:1px solid #a0a0a0;border-bottom:1px solid #a0a0a0;border-top:1px solid #fff;border-left:1px solid #fff"></div>
<div class="abs" style="left:692px;top:521px;width:108px;height:13px;background:#000"></div>
<div class="abs" style="left:692px;top:534px;width:108px;height:1px;background:#a0a0a0"></div>
<div class="abs" style="left:695px;top:537px;width:102px;height:68px;background:#fff;border-left:1px solid #a0a0a0;border-top:1px solid #a0a0a0"></div>
<div class="abs" style="left:699px;top:556px;line-height:15px;font-size:12px;white-space:nowrap"><div style="letter-spacing:-0.63px">20 MB</div><div style="letter-spacing:0.07px">Nem lefoglalt</div></div>

<!-- CD-ROM 0 -->
<div class="abs" style="left:131px;top:615px;width:103px;height:29px;border-top:1px solid #fff;border-right:3px solid #fff"></div>
<div class="abs" style="left:234px;top:615px;width:1px;height:29px;background:#a0a0a0"></div>
<svg class="cdic" style="left:142px;top:620px" width="15" height="15"><use href="#cd"/></svg>
<div class="abs" style="left:158px;top:623px;line-height:15px;font-size:12px;white-space:nowrap"><div style="font-weight:bold;letter-spacing:-0.04px">CD-ROM 0</div></div>
<div class="abs" style="left:140px;top:638px;height:6px;overflow:hidden;line-height:15px;font-size:12px;letter-spacing:-0.3px">DVD (E:)</div>

<!-- legend -->
<div class="abs" style="left:130px;top:644px;width:750px;height:19px;background:#f0f0f0;border-left:1px solid #a0a0a0"></div>
<div class="abs" style="left:130px;top:644px;width:750px;height:1px;background:#fff"></div>
<div class="abs" style="left:137px;top:648px;width:11px;height:12px;background:#000"></div>
<div class="abs" style="left:152px;top:647px;line-height:15px;font-size:12px;letter-spacing:0.07px;white-space:nowrap">Nem lefoglalt</div>
<div class="abs" style="left:230px;top:648px;width:11px;height:12px;background:#000080"></div>
<div class="abs" style="left:245px;top:647px;line-height:15px;font-size:12px;letter-spacing:-0.2px;white-space:nowrap">Elsődleges partíció</div>
<div class="abs" style="left:130px;top:663px;width:750px;height:1px;background:#a0a0a0"></div>
<div class="abs" style="left:129px;top:664px;width:752px;height:1px;background:#fff"></div>
<!-- status bar -->
<div class="abs" style="left:660px;top:667px;width:1px;height:20px;background:#d8d8d8"></div>
<div class="abs" style="left:793px;top:667px;width:1px;height:20px;background:#d8d8d8"></div>

<!-- taskbar -->
<div class="abs" style="left:0;top:728px;width:1366px;height:40px;background:#05080c"></div>
<svg class="abs" style="left:16px;top:740px" width="17" height="17"><path d="M0 2.3L6.8 1.4V7.9H0Z M7.7 1.3L16.5 0V7.9H7.7Z M0 8.8H6.8V15.4L0 14.5Z M7.7 8.8H16.5V16.8L7.7 15.5Z" fill="#fff"/></svg>
<svg class="abs" style="left:63px;top:739px" width="18" height="18"><circle cx="11.3" cy="6.5" r="5.2" stroke="#fff" stroke-width="1.2" fill="none"/><path d="M7.6 10.2L1 16.8" stroke="#fff" stroke-width="1.3"/></svg>
<svg class="abs" style="left:109px;top:740px" width="22" height="16"><rect x="4.5" y="0.5" width="12" height="14" stroke="#fff" fill="none"/><path d="M2.5 2.5H0.5V12.5H2.5M18.5 2.5H20.5V12.5H18.5" stroke="#fff" fill="none"/></svg>
<svg class="abs" style="left:160px;top:737px" width="21" height="22"><path d="M10.7 1C5 1 1 5 0.6 9.5C2.5 6.3 5.6 5 8.2 5C11.4 5 13.8 6.9 14.2 9.6H5.3C5.5 4.6 1.2 7.2 1.2 11.3C1.2 17.5 6 21 11.3 21C14.3 21 17 20.1 19.2 18.7V14C17.6 15.4 14.9 16.6 12 16.6C8.3 16.6 6.1 14.8 5.9 12.7H20.3V10.8C20.3 5.2 16.8 1 10.7 1Z" fill="#1e7bd7"/></svg>
<!-- adat (D:) -->
<svg class="abs" style="left:205px;top:746px" width="23" height="13"><path d="M0.5 6.5L6.5 1.5H22L22.5 7.5V10.5L16 12.5H1Z" fill="#cfcfcf"/><path d="M0.5 6.5H16.5L22.5 2M16.5 6.5V12.5" stroke="#a6a6a6" fill="none"/><path d="M1 7H16V12.5H1Z" fill="#9c9c9c"/><rect x="7" y="9" width="2" height="1" fill="#3f3"/></svg>
<div class="tbt" style="left:233px;top:728px">adat (D:)</div>
<div class="ul" style="left:199px;width:141px"></div>
<!-- store -->
<svg class="abs" style="left:356px;top:736px" width="23" height="25"><path d="M7 6V4C7 1.5 9 0.6 11.5 0.6C14 0.6 16 1.5 16 4V6" stroke="#fff" stroke-width="1.2" fill="none"/><path d="M1 6H22L21 24H2Z" fill="#fff"/><path d="M6.5 10H11V14H6.5ZM12 10H16.5V14H12ZM6.5 15H11V19H6.5ZM12 15H16.5V19H12Z" fill="#05080c"/></svg>
<!-- outlook -->
<svg class="abs" style="left:403px;top:736px" width="27" height="27"><path d="M0 3L14 0V24L0 21Z" fill="#0a64c2"/><rect x="13" y="6" width="12" height="12" fill="#0a64c2"/><path d="M14 7H24V13L19 10Z" fill="#fff"/><ellipse cx="6.3" cy="12" rx="3.8" ry="4.6" stroke="#fff" stroke-width="2.2" fill="none"/><rect x="10" y="14" width="15" height="12" fill="#e9b06b"/><path d="M10 14L17.5 20L25 14" stroke="#fff" stroke-width="1.2" fill="none"/></svg>
<div class="tbt" style="left:431px;top:728px">Beérkezett üzenet...</div>
<div class="ul" style="left:397px;width:141px"></div>
<!-- notepad -->
<svg class="abs" style="left:553px;top:737px" width="23" height="22"><path d="M6 0.5H22L16.5 20.5H0.5Z" fill="#8fd0dc"/><path d="M6 0.5H22L16.5 20.5H0.5Z" fill="url(#np)"/><defs><linearGradient id="np" x1="0" y1="0" x2="1" y2="1"><stop offset="0" stop-color="#e9fbff"/><stop offset="1" stop-color="#4aa0b4"/></linearGradient></defs><path d="M22 0.5L23 3L18 21L16.5 20.5Z" fill="#d9a54a"/></svg>
<div class="tbt" style="left:581px;top:728px">rendszergazda - J...</div>
<div class="ul" style="left:547px;width:141px"></div>
<!-- photofiltre -->
<div class="abs" style="left:704px;top:739px;width:22px;height:18px;background:linear-gradient(135deg,#ff2000 0%,#ffb000 25%,#4ad000 50%,#00b0a0 70%,#0030ff 100%);border:1px solid #222"></div>
<div class="tbt" style="left:731px;top:728px">PhotoFiltre</div>
<div class="ul" style="left:697px;width:140px"></div>
<!-- biztonsagi -->
<svg class="abs" style="left:852px;top:735px" width="24" height="26"><ellipse cx="15" cy="11" rx="7" ry="7" fill="#d0d0d0"/><circle cx="15" cy="11" r="2" fill="#888"/><path d="M1 18L8 13H23V19L17 24H1Z" fill="#e6e6e6"/><path d="M1 18H17V24H1Z" fill="#bdbdbd"/><path d="M4 2L9 8H6V14H3V8H0Z" fill="#35c42c" transform="rotate(180 4.5 8)"/><path d="M12 2L16 7H13.5V13H10.5V7H8Z" fill="#35c42c"/></svg>
<div class="tbt" style="left:880px;top:728px;letter-spacing:-0.15px">Biztonsági menté...</div>
<div class="ul" style="left:846px;width:140px"></div>
<!-- active lemezkezeles -->
<div class="abs" style="left:991px;top:728px;width:148px;height:40px;background:#37393c"></div>
<svg class="abs" style="left:1001px;top:739px" width="23" height="20"><path d="M6 0.5H21.5L22.5 2V9H6Z" fill="#e0e0e0"/><path d="M6 3H22.5V8H6Z" fill="#4b4b4b"/><rect x="18" y="5" width="2" height="1" fill="#3f3"/><path d="M0.5 8H16.5V19.5H0.5Z" fill="#dcdcdc" stroke="#9a9a9a"/><rect x="3" y="12" width="3" height="4" fill="#333"/><rect x="10" y="12" width="3" height="4" fill="#333"/></svg>
<div class="tbt" style="left:1029px;top:728px;letter-spacing:-0.5px">Lemezkezelés</div>
<div class="ul" style="left:991px;width:148px"></div>
<!-- tray -->
<svg class="abs" style="left:1147px;top:741px" width="14" height="9"><path d="M1 8L7 2L13 8" stroke="#fff" stroke-width="1.2" fill="none"/></svg>
<svg class="abs" style="left:1170px;top:741px" width="17" height="13"><path d="M2 0V3M5 0V3M0.5 3H6.5V5.5C6.5 7 5 8 3.5 8V12" stroke="#fff" stroke-width="1.1" fill="none"/><rect x="6.5" y="3.5" width="9" height="7" stroke="#fff" fill="none"/><rect x="8" y="5" width="6" height="4" fill="#fff"/><rect x="15.5" y="5.5" width="1.5" height="3" fill="#fff"/></svg>
<svg class="abs" style="left:1196px;top:742px" width="14" height="14"><path d="M1 13A12 12 0 0 1 13 1M3.5 13A9.5 9.5 0 0 1 13 3.5M6 13A7 7 0 0 1 13 6M8.5 13A4.5 4.5 0 0 1 13 8.5" stroke="#fff" stroke-width="0.9" fill="none"/><circle cx="11.5" cy="11.5" r="1.6" fill="#fff"/></svg>
<svg class="abs" style="left:1217px;top:741px" width="18" height="15"><path d="M0.5 4.5H3.5L7.5 1V14L3.5 10.5H0.5Z" stroke="#fff" stroke-width="1" fill="none"/><path d="M10 5A3 3 0 0 1 10 10M12.3 3A6 6 0 0 1 12.3 12M14.6 1A9 9 0 0 1 14.6 14" stroke="#fff" stroke-width="1" fill="none"/></svg>
<div class="tbt" style="left:1244px;top:728px;width:63px;height:40px;line-height:17px;text-align:center;padding-top:4px;font-size:12px;letter-spacing:-0.5px">14:36<br>2016. 09. 02.</div>
<svg class="abs" style="left:1325px;top:740px" width="17" height="17"><path d="M0.5 0.5H16.5V12.5H11L8.5 15.5L6 12.5H0.5Z" stroke="#fff" stroke-width="1" fill="none"/></svg>
<div class="abs" style="left:1361px;top:728px;width:1px;height:40px;background:#4a4d52"></div>

</body></html>
